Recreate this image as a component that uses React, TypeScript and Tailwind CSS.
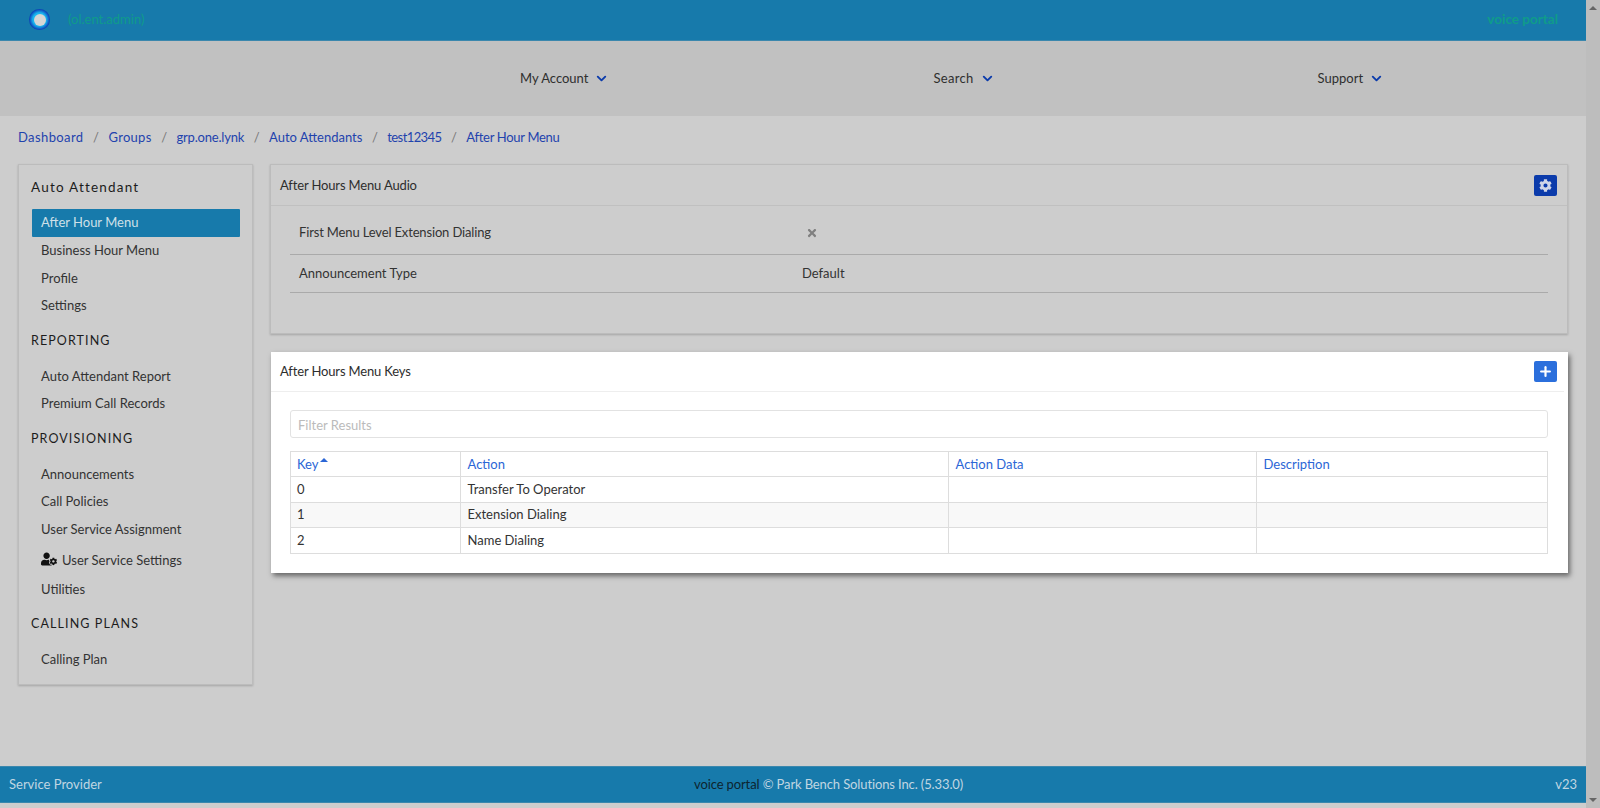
import { ChevronDown, Plus } from "lucide-react";
import { FaCog, FaTimes, FaUserCog } from "react-icons/fa";

const crumbs = [
  { label: "Dashboard", fit: "tracking-[0.4px]" },
  { label: "Groups", fit: "tracking-[0.3px]" },
  { label: "grp.one.lynk", fit: "tracking-[-0.2px]" },
  { label: "Auto Attendants", fit: "" },
  { label: "test12345", fit: "tracking-[-0.6px]" },
  { label: "After Hour Menu", fit: "tracking-[-0.3px]" },
];

const rows = [
  { key: "0", action: "Transfer To Operator", height: "h-[26px]", bg: "" },
  { key: "1", action: "Extension Dialing", height: "h-[25px]", bg: "bg-[#f8f8f8]" },
  { key: "2", action: "Name Dialing", height: "h-[26px]", bg: "" },
];

const NavItem = ({ label, className }: { label: string; className: string }) => {
  return (
    <div className={`flex items-center gap-[6px] text-[13px] text-[#2f2f2f] ${className}`}>
      <span>{label}</span>
      <ChevronDown size={15} strokeWidth={3} className="text-[#0b3bab]" />
    </div>
  );
};

const SideHeading = ({ label, className }: { label: string; className: string }) => {
  return <div className={`pl-[12px] text-[12.5px] leading-[20px] tracking-[1.1px] text-[#1c1c1c] ${className}`}>{label}</div>;
};

const SideLink = ({ label }: { label: string }) => {
  return <div className="h-[27.5px] pl-[22px] text-[13px] leading-[27.5px] text-[#333]">{label}</div>;
};

const Sidebar = () => {
  return (
    <aside className="h-[521px] w-[235px] shrink-0 border border-[#bcbcbc] pt-[12px] shadow-[0_1px_2px_rgba(0,0,0,0.2)]">
      <div className="pl-[12px] text-[13.5px] leading-[20px] tracking-[1.2px] text-[#1c1c1c]">Auto Attendant</div>
      <div className="ml-[13px] mt-[12px] h-[28px] w-[208px] rounded-[1px] bg-[#177aab] pl-[9px] text-[13px] leading-[27px] text-[#cfe0e8]">
        After Hour Menu
      </div>
      <SideLink label="Business Hour Menu" />
      <SideLink label="Profile" />
      <SideLink label="Settings" />
      <SideHeading label="REPORTING" className="mt-[11px]" />
      <div className="mt-[12px]">
        <SideLink label="Auto Attendant Report" />
        <SideLink label="Premium Call Records" />
      </div>
      <SideHeading label="PROVISIONING" className="mt-[11px]" />
      <div className="mt-[12px]">
        <SideLink label="Announcements" />
        <SideLink label="Call Policies" />
        <SideLink label="User Service Assignment" />
        <div className="flex h-[32.5px] items-center pl-[22px] pt-[3px] text-[13px] text-[#333]">
          <FaUserCog size={16} className="mr-[5px] -mt-[4px] text-[#111]" />
          <span>User Service Settings</span>
        </div>
        <SideLink label="Utilities" />
      </div>
      <SideHeading label="CALLING PLANS" className="mt-[11px]" />
      <div className="mt-[12px]">
        <SideLink label="Calling Plan" />
      </div>
    </aside>
  );
};

const AudioPanel = () => {
  return (
    <section className="h-[170px] border border-[#bcbcbc] shadow-[0_1px_2px_rgba(0,0,0,0.2)]">
      <div className="flex h-[41px] items-center justify-between border-b border-[#c0c0c0] pl-[9px] pr-[10px]">
        <span className="pt-[1px] text-[13px] tracking-[-0.15px] text-[#2d2d2d]">After Hours Menu Audio</span>
        <button className="flex h-[21px] w-[23px] items-center justify-center rounded-[2px] bg-[#0b3bab] text-[#cfd6e8]">
          <FaCog size={13} />
        </button>
      </div>
      <div className="pl-[19px] pr-[19px]">
        <div className="flex h-[49px] items-center border-b border-[#aaa] pl-[9px] pt-[6px] text-[13px] text-[#333]">
          <span className="w-[503px] tracking-[-0.15px]">First Menu Level Extension Dialing</span>
          <FaTimes size={12} className="ml-[4px] -mt-[1px] text-[#808080]" />
        </div>
        <div className="flex h-[38px] items-center border-b border-[#aaa] pl-[9px] text-[13px] text-[#333]">
          <span className="w-[503px]">Announcement Type</span>
          <span>Default</span>
        </div>
      </div>
    </section>
  );
};

const KeysPanel = () => {
  return (
    <section className="ml-[1px] mt-[18px] h-[221px] border-r-[4px] border-white bg-white shadow-[2px_3px_5px_rgba(0,0,0,0.5)]">
      <div className="flex h-[40px] items-center justify-between border-b border-[#eee] pl-[9px] pr-[7px]">
        <span className="pt-[1px] text-[13px] tracking-[-0.15px] text-[#2d2d2d]">After Hours Menu Keys</span>
        <button className="flex h-[21px] w-[23px] items-center justify-center rounded-[2px] bg-[#2b6fdc] text-white">
          <Plus size={15} strokeWidth={3.5} />
        </button>
      </div>
      <div className="pl-[19px] pr-[16px] pt-[18px]">
        <input
          placeholder="Filter Results"
          className="h-[28px] w-full rounded-[3px] border border-[#e2e2e2] px-[7px] pt-[1px] text-[13px] outline-none placeholder:text-[#bbb]"
        />
        <table className="mt-[13px] w-full table-fixed border-collapse text-[13px] text-[#333]">
          <colgroup>
            <col className="w-[169.5px]" />
            <col className="w-[488px]" />
            <col className="w-[308px]" />
            <col />
          </colgroup>
          <thead>
            <tr className="h-[25px] text-left font-normal text-[#2b66d6]">
              <th className="relative border border-[#ddd] px-[6px] pt-[2px] font-normal">
                Key
                <span className="absolute left-[29px] top-[6px] h-0 w-0 border-x-[4px] border-b-[4px] border-x-transparent border-b-[#2b66d6]" />
              </th>
              <th className="border border-[#ddd] px-[7px] pt-[2px] font-normal">Action</th>
              <th className="border border-[#ddd] px-[7px] pt-[2px] font-normal">Action Data</th>
              <th className="border border-[#ddd] px-[7px] pt-[2px] font-normal">Description</th>
            </tr>
          </thead>
          <tbody>
            {rows.map((row) => (
              <tr key={row.key} className={`${row.height} ${row.bg}`}>
                <td className="border border-[#ddd] px-[6px]">{row.key}</td>
                <td className="border border-[#ddd] px-[7px]">{row.action}</td>
                <td className="border border-[#ddd] px-[7px]"></td>
                <td className="border border-[#ddd] px-[7px]"></td>
              </tr>
            ))}
          </tbody>
        </table>
      </div>
    </section>
  );
};

const App = () => {
  return (
    <div className="flex h-[808px] overflow-hidden bg-[#cdcdcd] font-['Lato',sans-serif]">
      <div className="flex min-w-0 flex-1 flex-col">
        <header className="flex h-[41px] shrink-0 items-center justify-between border-b border-[#3a87ad] bg-[#177aab] pb-[1px] pl-[29px] pr-[28px]">
          <div className="flex items-center gap-[18px]">
            <div className="flex h-[21px] w-[21px] items-center justify-center rounded-full bg-[radial-gradient(circle,#19b4ee_45%,#0a2fb0_72%)]">
              <div className="h-[12px] w-[12px] rounded-full bg-[#d5d5d5]" />
            </div>
            <span className="text-[13px] text-[#0f9c8a]">(ol.ent.admin)</span>
          </div>
          <span className="text-[13.5px] font-bold text-[#0f9c8a]">voice portal</span>
        </header>

        <nav className="flex h-[75px] shrink-0 items-center bg-[#c1c1c1]">
          <NavItem label="My Account" className="ml-[520px]" />
          <NavItem label="Search" className="ml-[324px] tracking-[0.3px]" />
          <NavItem label="Support" className="ml-[323px]" />
        </nav>

        <div className="flex h-[48px] shrink-0 items-center pb-[4px] pl-[18px] text-[13px]">
          {crumbs.map((crumb, i) => (
            <div key={crumb.label} className="flex items-center">
              {i > 0 && <span className="px-[9.5px] text-[#777]">/</span>}
              <span className={`text-[#1f43ad] ${crumb.fit}`}>{crumb.label}</span>
            </div>
          ))}
        </div>

        <div className="flex flex-1 gap-[17px] pl-[18px] pr-[18px]">
          <Sidebar />
          <div className="min-w-0 flex-1">
            <AudioPanel />
            <KeysPanel />
          </div>
        </div>

        <footer className="relative mb-[5px] flex h-[37px] shrink-0 items-center justify-between border-y border-[#3a87ad] bg-[#177aab] pl-[9px] pr-[9px] text-[13px] text-[#c0d6e2]">
          <span>Service Provider</span>
          <span className="absolute left-[694px] tracking-[-0.12px]">
            <span className="text-[#0d2530]">voice portal</span> © Park Bench Solutions Inc. (5.33.0)
          </span>
          <span>v23</span>
        </footer>
      </div>

      <div className="flex w-[14px] shrink-0 flex-col items-center justify-between bg-[#bdbdbd] py-[6px]">
        <div className="h-0 w-0 border-x-[4px] border-b-[4px] border-x-transparent border-b-[#666]" />
        <div className="h-0 w-0 border-x-[4px] border-t-[4px] border-x-transparent border-t-[#666]" />
      </div>
    </div>
  );
};

export default App;
